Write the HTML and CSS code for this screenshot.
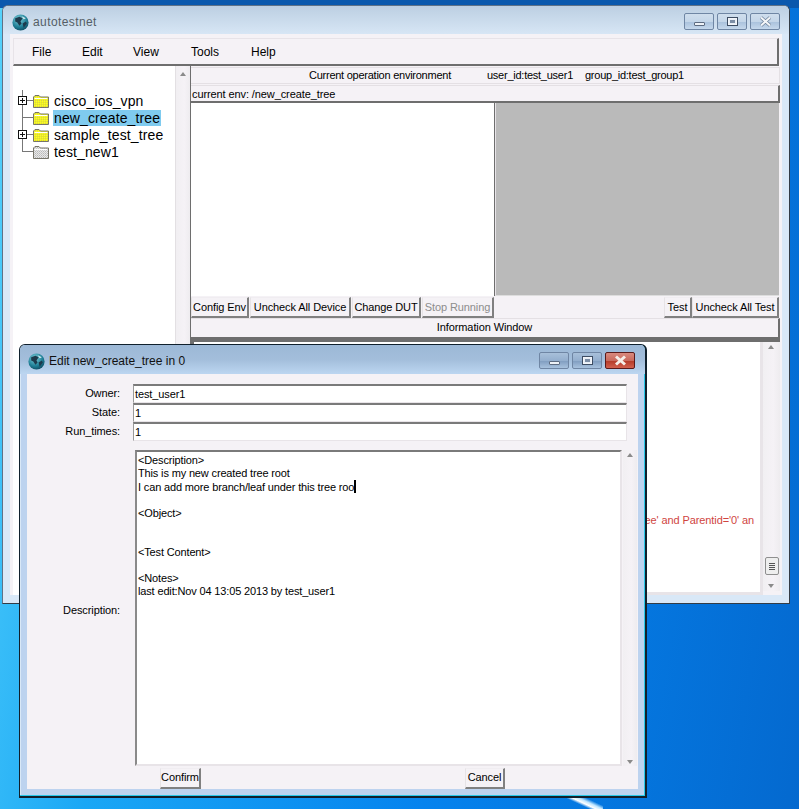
FILE: index.html
```html
<!DOCTYPE html>
<html lang="en">
<head>
<meta charset="utf-8">
<title>autotestnet</title>
<link rel="stylesheet" href="styles.css">
</head>
<body>
<svg class="defs" width="0" height="0" aria-hidden="true">
  <defs>
    <radialGradient id="gl" cx="0.4" cy="0.3" r="0.8"><stop offset="0" stop-color="#7fd0dc"/><stop offset="0.6" stop-color="#1f7f96"/><stop offset="1" stop-color="#0b3f55"/></radialGradient>
    <symbol id="globe" viewBox="0 0 16 16">
      <circle cx="8" cy="8" r="7.6" fill="url(#gl)"/>
      <path d="M3 4 7 2.5 10 4 8 7 9 9 7 11 5 8 3 7ZM10 9 13 7 14 9 11 13Z" fill="#1d3a4c"/>
      <path d="M9 2 13 4 11 5Z" fill="#d8eef2"/>
    </symbol>
    <pattern id="dith" width="2" height="2" patternUnits="userSpaceOnUse"><rect width="2" height="2" fill="#ffff00"/><rect width="1" height="1" fill="#c8c860"/><rect x="1" y="1" width="1" height="1" fill="#e8e850"/></pattern>
    <pattern id="grey" width="2" height="2" patternUnits="userSpaceOnUse"><rect width="2" height="2" fill="#e8e8e8"/><rect width="1" height="1" fill="#b8b8b8"/><rect x="1" y="1" width="1" height="1" fill="#c8c8c8"/></pattern>
    <symbol id="folder-y" viewBox="0 0 16 14">
      <path d="M.5 13.500V3L2 1.500H6L7.500 3H15.500V13.500Z" fill="url(#dith)" stroke="#77756a"/>
      <path d="M1.500 4.500H14.500" stroke="#fff"/>
    </symbol>
    <symbol id="folder-g" viewBox="0 0 16 14">
      <path d="M.5 13.500V3L2 1.500H6L7.500 3H15.500V13.500Z" fill="url(#grey)" stroke="#77756a"/>
      <path d="M1.500 4.500H14.500" stroke="#fff"/>
    </symbol>
  </defs>
</svg>

<main class="desktop">
  <section class="win win-main">
    <header class="titlebar">
      <svg class="globe"><use href="#globe"/></svg>
      <span class="title title-main">autotestnet</span>
      <div class="caps">
        <span class="cap cap-min"><i></i></span>
        <span class="cap cap-max"><i></i></span>
        <span class="cap cap-close">
          <svg width="13" height="11" viewBox="0 0 13 11"><path d="M2 1.500 11 9.500M11 1.500 2 9.500" fill="none" stroke="#6b7f97" stroke-width="3.400"/><path d="M2 1.500 11 9.500M11 1.500 2 9.500" fill="none" stroke="#f4f6f8" stroke-width="2"/></svg>
        </span>
      </div>
    </header>
    <div class="client">
      <nav class="menubar">
        <span class="menu menu-file">File</span>
        <span class="menu menu-edit">Edit</span>
        <span class="menu menu-view">View</span>
        <span class="menu menu-tools">Tools</span>
        <span class="menu menu-help">Help</span>
      </nav>
      <div class="split">
        <aside class="tree-pane">
          <ul class="tree">
            <li class="node has-kids first">
              <span class="twig"><b class="plus"></b></span>
              <svg class="folder"><use href="#folder-y"/></svg>
              <span class="node-label">cisco_ios_vpn</span>
            </li>
            <li class="node">
              <span class="twig"></span>
              <svg class="folder"><use href="#folder-y"/></svg>
              <span class="node-label selected">new_create_tree</span>
            </li>
            <li class="node has-kids">
              <span class="twig"><b class="plus"></b></span>
              <svg class="folder"><use href="#folder-y"/></svg>
              <span class="node-label">sample_test_tree</span>
            </li>
            <li class="node last">
              <span class="twig"></span>
              <svg class="folder"><use href="#folder-g"/></svg>
              <span class="node-label">test_new1</span>
            </li>
          </ul>
        </aside>
        <div class="vscroll tree-scroll"><span class="arrow-up"></span></div>
        <div class="work">
          <div class="env-head">
            <span class="env-a">Current operation environment</span>
            <span class="env-b">user_id:test_user1</span>
            <span class="env-c">group_id:test_group1</span>
          </div>
          <div class="env-path">current env: /new_create_tree</div>
          <div class="panels">
            <div class="panel-white"></div>
            <div class="panel-grey"></div>
          </div>
          <div class="actions">
            <button class="btn btn-config">Config Env</button>
            <button class="btn btn-uncheck-dev">Uncheck All Device</button>
            <button class="btn btn-dut">Change DUT</button>
            <button class="btn btn-stop" disabled>Stop Running</button>
            <span class="spacer"></span>
            <button class="btn btn-test">Test</button>
            <button class="btn btn-uncheck-test">Uncheck All Test</button>
          </div>
          <div class="info-head">Information Window</div>
          <div class="info">
            <div class="info-text">
              <p class="log-line">select * from tree where Name='new_create_tree' and Parentid='0' an</p>
            </div>
            <div class="vscroll info-scroll">
              <span class="arrow-up"></span>
              <span class="thumb"><i></i><i></i><i></i><i></i></span>
              <span class="arrow-down"></span>
            </div>
          </div>
        </div>
      </div>
    </div>
  </section>

  <section class="win win-edit">
    <header class="titlebar edit-bar">
      <svg class="globe"><use href="#globe"/></svg>
      <span class="title">Edit new_create_tree in 0</span>
      <div class="caps">
        <span class="cap cap-min"><i></i></span>
        <span class="cap cap-max"><i></i></span>
        <span class="cap cap-close red">
          <svg width="13" height="11" viewBox="0 0 13 11"><path d="M2 1.500 11 9.500M11 1.500 2 9.500" fill="none" stroke="#f6efe9" stroke-width="3"/></svg>
        </span>
      </div>
    </header>
    <div class="form">
      <div class="field"><label class="lbl">Owner:</label><div class="input">test_user1</div></div>
      <div class="field"><label class="lbl">State:</label><div class="input">1</div></div>
      <div class="field"><label class="lbl">Run_times:</label><div class="input">1</div></div>
      <div class="desc-row">
        <label class="lbl desc-lbl">Description:</label>
        <div class="textarea">
          <div class="ta-text">&lt;Description&gt;
This is my new created tree root
I can add more branch/leaf under this tree roo<span class="caret"></span>

&lt;Object&gt;


&lt;Test Content&gt;

&lt;Notes&gt;
last edit:Nov 04 13:05 2013 by test_user1</div>
        </div>
        <div class="vscroll desc-scroll"><span class="arrow-up"></span><span class="arrow-down"></span></div>
      </div>
      <div class="form-actions">
        <button class="btn btn-confirm">Confirm</button>
        <button class="btn btn-cancel">Cancel</button>
      </div>
    </div>
  </section>
</main>
</body>
</html>
```

FILE: styles.css
```css
* { box-sizing: border-box; }
html, body { margin: 0; padding: 0; }
body { width: 799px; height: 809px; overflow: hidden; font: 11px/13px "Liberation Sans", Arial, sans-serif; letter-spacing: -.1px; color: #000; }
.defs { position: absolute; }

.desktop {
  position: relative;
  width: 799px;
  height: 809px;
  overflow: hidden;
  background: linear-gradient(100deg, #55d2fb 0%, #1aa7f5 24%, #0583ee 60%, #0469cf 100%);
}
.desktop::before {
  content: "";
  position: absolute;
  left: 0; right: 0; top: 0;
  height: 8px;
  background: #0a58ad;
}
.desktop::after {
  content: "";
  position: absolute;
  left: 563px; top: 797px;
  width: 40px; height: 12px;
  background: linear-gradient(25deg, transparent 40%, #fff 50%, #bfe6ff 60%, transparent 72%);
}

.win { position: absolute; display: flex; flex-direction: column; z-index: 1; }
.win-main {
  left: 2px; top: 5px; width: 788px; height: 599px;
  border: 1px solid #5f7287;
  border-right-color: #333c46;
  border-bottom-color: #333c46;
  border-radius: 6px 6px 0 0;
  background: #d9e8f7;
  padding: 0 7px 8px;
}
.win-edit {
  left: 19px; top: 344px; width: 628px; height: 454px;
  border: 1px solid #10202c;
  border-right-width: 2px;
  border-bottom-width: 2px;
  border-radius: 6px 6px 0 0;
  background: #bdd3ef;
  padding: 0 7px 7px;
  box-shadow: inset -1px -1px 0 #28c8e8, inset 1px 1px 0 #d9e8f7;
}

.titlebar { display: flex; align-items: center; flex: none; height: 28px; margin: 0 -7px; padding: 4px 9px 0 9px; border-radius: 5px 5px 0 0; background: linear-gradient(180deg, #bccfe2 0%, #d7e6f5 100%); }
.edit-bar { height: 29px; padding: 3px 10px 0 8px; background: linear-gradient(180deg, #9cb8d6 0%, #a3bedb 50%, #bcd6f1 100%); }
.globe { width: 17px; height: 17px; flex: none; margin-right: 4px; }
.title { font-size: 12px; letter-spacing: 0; color: #111; white-space: nowrap; }
.title-main { color: #555e66; letter-spacing: .4px; font-size: 12px; }
.caps { display: flex; gap: 3px; margin-left: auto; padding-bottom: 2px; }
.cap { width: 30px; height: 17px; display: flex; align-items: center; justify-content: center; border: 1px solid #6f86a4; border-radius: 2px; background: linear-gradient(180deg, #cfdeed 0%, #c4d6e9 50%, #a9c1dc 52%, #c5d8ec 100%); }
.edit-bar .cap { background: linear-gradient(180deg, #a8c0da 0%, #94afce 50%, #7f9cbf 52%, #a8c2de 100%); }
.cap-min i { width: 11px; height: 4px; margin-top: 5px; border: 1px solid #5d6b80; border-radius: 1px; background: #eef2f7; }
.cap-max i { width: 11px; height: 9px; border: 1px solid #3d4d63; background: #e8eef5; box-shadow: inset 0 0 0 1px #f2f5fa; position: relative; }
.cap-max i::after { content: ""; position: absolute; left: 2px; top: 2px; width: 5px; height: 3px; background: #7c8ea6; }
.cap-close.red { border-color: #5a1a1a; background: linear-gradient(180deg, #d98a7e 0%, #c96a5d 50%, #b33a28 52%, #d2604e 100%); }

.client { flex: 1; display: flex; flex-direction: column; min-height: 0; background: #f5f2f6; padding: 4px 3px 0; }
.menubar {
  flex: none; height: 28px; display: flex; align-items: center;
  padding: 2px 0 0 18px;
  font-size: 12px;
  background: #f5f2f6;
  border-top: 1px solid #e7e3e8;
  border-left: 1px solid #e7e3e8;
  border-right: 2px solid #6e6e6e;
  border-bottom: 2px solid #6e6e6e;
}
.menu { flex: none; letter-spacing: 0; }
.menu-file { width: 50px; }
.menu-edit { width: 51px; }
.menu-view { width: 58px; }
.menu-tools { width: 60px; }

.split { flex: 1; display: flex; min-height: 0; }
.tree-pane { width: 162px; flex: none; background: #fff; padding-top: 26px; }
.tree { list-style: none; margin: 0; padding: 0; }
.node { position: relative; display: flex; align-items: center; height: 17px; font-size: 14px; line-height: 16px; }
.twig { position: relative; width: 20px; height: 17px; flex: none; }
.twig::before { content: ""; position: absolute; left: 9px; top: 0; bottom: 0; border-left: 1px solid #777; }
.twig::after { content: ""; position: absolute; left: 9px; top: 8px; width: 11px; border-top: 1px solid #777; }
.first .twig::before { top: -2px; }
.last .twig::before { bottom: 8px; }
.plus { position: absolute; z-index: 1; left: 5px; top: 4px; width: 9px; height: 9px; border: 1px solid #111; background: linear-gradient(#111,#111) center/5px 1px no-repeat, linear-gradient(#111,#111) center/1px 5px no-repeat, #fff; }
.folder { width: 16px; height: 14px; flex: none; margin-right: 4px; }
.node-label { padding: 0 1px; letter-spacing: .12px; white-space: nowrap; }
.selected { background: #7fcbef; height: 16px; }

.vscroll { position: relative; flex: none; width: 15px; background: linear-gradient(90deg, #f1eff2, #f5f2f6 60%, #eeecef); }
.tree-scroll { border-left: 1px solid #e3e0e3; }
.arrow-up, .arrow-down { position: absolute; left: 4px; width: 0; height: 0; border-left: 3.5px solid transparent; border-right: 3.5px solid transparent; }
.arrow-up { top: 6px; border-bottom: 4px solid #8a8a8a; }
.arrow-down { bottom: 6px; border-top: 4px solid #8a8a8a; }

.work { flex: 1; min-width: 0; display: flex; flex-direction: column; margin-right: -1px; border-left: 1px solid #6e6e6e; }
.env-head { flex: none; height: 17px; margin-top: 1px; display: flex; align-items: center; border-top: 1px solid #e4e0e4; border-right: 1px solid #e4e0e4; border-bottom: 1px solid #e4e0e4; white-space: nowrap; letter-spacing: -.25px; }
.env-a { margin-left: 118px; width: 178px; }
.env-b { width: 98px; }
.env-path { flex: none; height: 18px; padding: 2px 0 0 1px; border-top: 1px solid #e4e0e4; border-right: 2px solid #6e6e6e; border-bottom: 2px solid #6e6e6e; margin-top: 1px; }
.panels { flex: none; height: 193px; display: flex; }
.panel-white { width: 304px; background: #fff; border-right: 1px solid #6e6e6e; }
.panel-grey { flex: 1; background: #bababa; border-bottom: 1px solid #ddd; margin-right: 1px; border-left: 1px solid #e8e4e8; }
.actions { flex: none; height: 22px; display: flex; align-items: center; padding-top: 1px; padding-right: 1px; }
.spacer { flex: 1; }
.btn {
  height: 21px; padding: 0; margin: 0; font: inherit; letter-spacing: inherit; color: #000; white-space: nowrap; text-align: center;
  background: #f5f2f6;
  border-style: solid; border-width: 1px 2px 2px 1px;
  border-color: #f0edf1 #808080 #808080 #e6e3e6;
}
.btn[disabled] { color: #8d8d8d; }
.btn-config { width: 58px; margin-right: 1px; }
.btn-uncheck-dev { width: 101px; margin-right: 1px; }
.btn-dut { width: 69px; margin-right: 1px; }
.btn-stop { width: 72px; }
.btn-test { width: 28px; }
.btn-uncheck-test { width: 87px; }
.info-head { flex: none; height: 19px; padding-top: 2px; text-align: center; border-top: 1px solid #e4e0e4; border-right: 2px solid #6e6e6e; }
.info { flex: 1; min-height: 0; display: flex; border-top: 5px solid #6e6e6e; border-left: 3px solid #6e6e6e; }
.info-text { flex: 1; min-width: 0; background: #fff; overflow: hidden; border-right: 3px solid #e8e4e8; border-bottom: 3px solid #e8e4e8; padding: 172px 6px 0 0; display: flex; justify-content: flex-end; }
.log-line { margin: 0; color: #d0453f; white-space: nowrap; }
.info-scroll { width: 17px; margin-bottom: 4px; }
.info-scroll .arrow-up { left: 5px; top: 3px; }
.info-scroll .arrow-down { left: 5px; bottom: 3px; }
.thumb { position: absolute; left: 2px; bottom: 16px; width: 14px; height: 18px; display: flex; flex-direction: column; justify-content: center; gap: 1px; padding: 0 3px; border: 1px solid #8f8f8f; border-radius: 2px; background: #eeeeee; }
.thumb i { height: 1px; background: #555; }

.form { flex: 1; min-height: 0; display: flex; flex-direction: column; background: #f5f2f6; padding-top: 10px; }
.field { flex: none; height: 19px; display: flex; align-items: center; }
.lbl { flex: none; width: 93px; text-align: right; margin-right: 13px; position: relative; }
.input { flex: none; width: 494px; height: 19px; padding: 2px 0 0 1px; background: #fff; border-style: solid; border-width: 2px 1px 1px 1px; border-color: #7a7a7a #e8e4e8 #e8e4e8 #9a9a9a; }
.desc-row { flex: 1; min-height: 0; display: flex; margin-top: 9px; align-items: stretch; }
.desc-lbl { align-self: center; margin-right: 15px; padding-top: 4px; }
.textarea { flex: none; width: 487px; background: #fff; border-style: solid; border-width: 2px; border-color: #7a7a7a #e8e4e8 #e8e4e8 #8a8a8a; padding: 2px 0 0 1px; }
.ta-text { white-space: pre; letter-spacing: -.15px; }
.caret { display: inline-block; width: 2px; height: 13px; background: #000; vertical-align: -2px; }
.desc-scroll { width: 14px; margin-left: 1px; }
.desc-scroll .arrow-up { top: 3px; }
.desc-scroll .arrow-down { bottom: 2px; }
.form-actions { flex: none; height: 23px; display: flex; align-items: center; padding-top: 1px; }
.btn-confirm { width: 41px; margin-left: 133px; }
.btn-cancel { width: 40px; margin-left: 264px; }
```
